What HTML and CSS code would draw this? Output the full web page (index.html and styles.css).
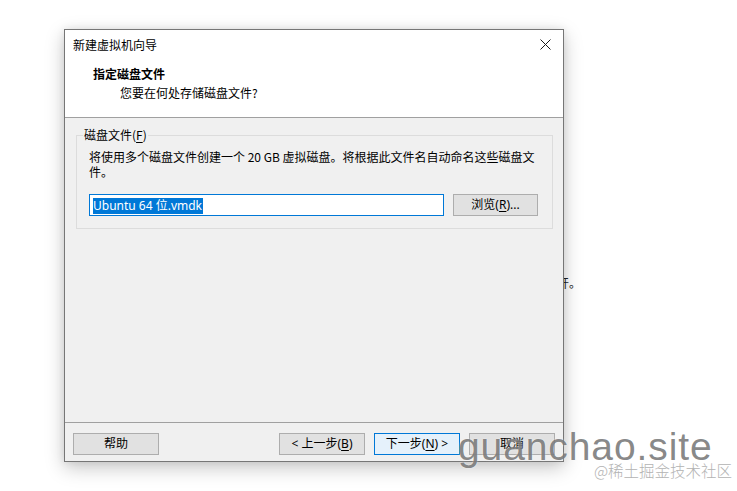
FILE: index.html
```html
<!DOCTYPE html>
<html lang="zh-CN">

<head>
    <meta charset="UTF-8">
    <meta name="viewport" content="width=device-width, initial-scale=1.0">
    <title>新建虚拟机向导</title>
    <link rel="stylesheet" href="styles.css">
</head>

<body>
    <p class="behind">开。</p>

    <div class="wizard">
        <div class="wizard-top">
            <div class="titlebar">
                <span class="titlebar-text">新建虚拟机向导</span>
                <span class="close">
                    <svg width="11" height="11" viewBox="0 0 11 11">
                        <path d="M0.5 0.5 L10.5 10.5 M10.5 0.5 L0.5 10.5" stroke="#1a1a1a" stroke-width="1" fill="none" />
                    </svg>
                </span>
            </div>
            <div class="page-head">
                <p class="page-title">指定磁盘文件</p>
                <p class="page-sub">您要在何处存储磁盘文件?</p>
            </div>
        </div>

        <div class="wizard-body">
            <fieldset class="group">
                <legend>磁盘文件(<u>F</u>)</legend>
                <p class="desc">将使用多个磁盘文件创建一个 20 GB 虚拟磁盘。将根据此文件名自动命名这些磁盘文<br>件。</p>
                <div class="file-row">
                    <div class="textbox"><span class="selected">Ubuntu 64 位.vmdk</span></div>
                    <button class="btn">浏览(<u>R</u>)...</button>
                </div>
            </fieldset>
        </div>

        <div class="wizard-foot">
            <button class="btn">帮助</button>
            <div class="nav">
                <button class="btn">&lt; 上一步(<u>B</u>)</button>
                <button class="btn btn-default">下一步(<u>N</u>) &gt;</button>
                <button class="btn">取消</button>
            </div>
        </div>
    </div>

    <div class="mark">
        <span class="mark-site">guanchao.site</span>
        <span class="mark-from">@稀土掘金技术社区</span>
    </div>
</body>

</html>
```

FILE: styles.css
```css
html,
body {
    margin: 0;
    padding: 0;
}

body {
    position: relative;
    width: 737px;
    height: 491px;
    overflow: hidden;
    background-color: #fff;
    font-family: "Noto Sans", "Noto Sans CJK SC", sans-serif;
    font-size: 12px;
    color: #000;
}

p {
    margin: 0;
}

u {
    text-decoration: underline;
    text-underline-offset: 2px;
}

/* text of the window underneath, mostly hidden */
.behind {
    position: absolute;
    left: 557px;
    top: 275px;
    line-height: 16px;
    color: #222;
    font-family: "Noto Sans CJK SC", sans-serif;
}

.wizard {
    position: relative;
    z-index: 1;
    box-sizing: border-box;
    width: 500px;
    height: 433px;
    margin: 29px 0 0 64px;
    border: 1px solid #767676;
    background-color: #f0f0f0;
    display: flex;
    flex-direction: column;
    box-shadow: 0 6px 18px rgba(0, 0, 0, 0.22), 0 0 8px rgba(0, 0, 0, 0.08);
}

.wizard-top {
    background-color: #fff;
    border-bottom: 1px solid #a0a0a0;
    height: 87px;
}

.titlebar {
    height: 29px;
    display: flex;
    align-items: center;
    justify-content: space-between;
    padding: 0 12px 0 8px;
}

.titlebar-text {
    font-family: "Noto Sans CJK SC", sans-serif;
    line-height: 16px;
}

.close {
    display: flex;
    width: 11px;
    height: 11px;
}

.page-head {
    padding: 7px 0 0 28px;
    font-family: "Noto Sans CJK SC", sans-serif;
}

.page-title {
    font-weight: 700;
    line-height: 16px;
}

.page-sub {
    margin-top: 3px;
    padding-left: 27px;
    line-height: 16px;
}

.wizard-body {
    flex: 1;
    padding: 10px 10px 0 11px;
    border-bottom: 1px solid #a0a0a0;
}

.group {
    margin: 0;
    padding: 6px 13px 12px 12px;
    border: 1px solid #dcdcdc;
}

.group legend {
    margin-left: -6px;
    padding: 0 1px;
    line-height: 14px;
    font-family: "Noto Sans CJK SC", sans-serif;
}

.desc {
    margin-top: 1px;
    line-height: 15px;
    font-family: "Noto Sans CJK SC", sans-serif;
}

.file-row {
    display: flex;
    gap: 9px;
    margin-top: 15px;
}

.textbox {
    box-sizing: border-box;
    width: 355px;
    height: 22px;
    padding: 2px 3px;
    border: 1px solid #0078d7;
    background-color: #fff;
}

.selected {
    display: inline-block;
    line-height: 16px;
    padding-right: 1px;
    background-color: #0078d7;
    color: #fff;
}

.btn {
    box-sizing: border-box;
    width: 86px;
    height: 22px;
    padding: 0;
    border: 1px solid #adadad;
    background-color: #e1e1e1;
    font-family: "Noto Sans", "Noto Sans CJK SC", sans-serif;
    font-size: 12px;
    line-height: 18px;
    color: #000;
}

.btn-default {
    border-color: #0078d7;
    background-color: #e5f1fb;
}

.file-row .btn {
    width: 85px;
}

.wizard-foot {
    height: 38px;
    padding: 10px 8px 0 8px;
    box-sizing: border-box;
    display: flex;
    justify-content: space-between;
    align-items: flex-start;
}

.nav {
    display: flex;
    gap: 9px;
}

/* site watermark over the bottom-right corner */
.mark {
    position: absolute;
    z-index: 2;
    left: 458px;
    top: 426px;
    width: 279px;
    height: 65px;
}

.mark-site {
    position: absolute;
    left: 0;
    top: 0;
    font-family: "Liberation Sans", Arial, sans-serif;
    font-size: 39px;
    letter-spacing: 0.9px;
    line-height: 42px;
    color: rgba(105, 105, 105, 0.8);
    text-shadow: 0 0 2px rgba(255, 255, 255, 0.6);
}

.mark-from {
    position: absolute;
    left: 136px;
    top: 34px;
    font-family: "Noto Sans CJK SC", sans-serif;
    font-weight: 300;
    font-size: 15.5px;
    line-height: 20px;
    color: #b3b3b3;
}
```
